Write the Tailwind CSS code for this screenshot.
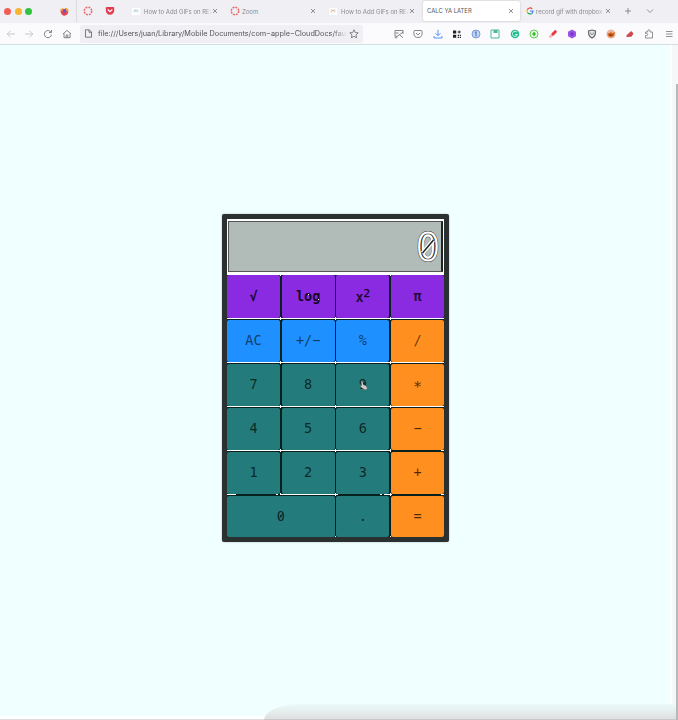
<!DOCTYPE html>
<html lang="en">
<head>
<meta charset="utf-8">
<title>CALC YA LATER</title>
<script src="https://cdn.jsdelivr.net/npm/@tailwindcss/browser@4"></script>
</head>
<body class="w-[678px] h-[720px] overflow-hidden bg-[#f0ffff] font-['Inter',sans-serif] flex flex-col relative">
<svg class="hidden">
  <symbol id="close" viewBox="0 0 6 6"><path d="M1 1l4 4M5 1L1 5" stroke="#77777b" stroke-width=".8" fill="none"/></symbol>
  <symbol id="canvas" viewBox="0 0 10 10"><circle cx="5" cy="5" r="3.7" fill="none" stroke="#e8676a" stroke-width="1.500" stroke-dasharray="1.900 1"/></symbol>
</svg>

<header class="h-[45px] shrink-0 flex flex-col border-b border-[#d5dfe0]">
  <div class="h-[23px] pb-[1px] bg-[#f0f0f4] flex items-center text-[6px] text-[#8a8a8f]">
    <div class="w-[77px] h-full flex items-center pl-[4px] border-r border-[#dadadf] shrink-0">
      <span class="size-[7px] rounded-full bg-[#f25c55] shrink-0"></span>
      <span class="size-[7px] rounded-full bg-[#f6b52e] ml-[4px] shrink-0"></span>
      <span class="size-[7px] rounded-full bg-[#2fc440] ml-[3px] shrink-0"></span>
      <svg class="ml-[28px] size-[9px] shrink-0" viewBox="0 0 9 9"><path d="M.8 2L2 3l.8-2L4 2.200 6 .8l.5 1.400 1.500-.4C9 6 7.500 8.500 4.500 8.500S0 6 .8 2z" fill="#f0702f"/><path d="M.8 3c1 0 2 1.500 3.500 1.800L3 5.500l3 .5 2.200-2C8 7 6 8.500 4.500 8.500S1 7 .8 3z" fill="#e6415a"/><circle cx="4.600" cy="4" r="1.900" fill="#7352c7"/><path d="M6 .8l2 1.200.3 2.500L6.300 3.500zM.8 1.800L2.800 1.500 2.500 3.500 1 4z" fill="#f9a72c"/></svg>
    </div>
    <svg class="ml-[6px] size-[10px] shrink-0"><use href="#canvas"/></svg>
    <svg class="ml-[12px] size-[10px] shrink-0" viewBox="0 0 10 10"><path d="M1.800 1h6.400q1 0 1 1v2.500a4.200 4.200 0 0 1-8.400 0V2q0-1 1-1z" fill="#e23b50"/><path d="M3 3.800l2 1.900 2-1.900" fill="none" stroke="#fff" stroke-width="1.200" stroke-linecap="round"/></svg>
    <div class="ml-[17px] w-[86px] flex items-center shrink-0">
      <span class="w-[8px] h-[7px] bg-white text-[4px] leading-[6px] text-center text-[#888]">(•)</span>
      <span class="ml-[4px] w-[68px] overflow-hidden whitespace-nowrap [mask-image:linear-gradient(90deg,#000_90%,transparent)]">How to Add GIFs on REA</span>
      <svg class="size-[6px] shrink-0"><use href="#close"/></svg>
    </div>
    <div class="ml-[12px] w-[86px] flex items-center shrink-0">
      <svg class="size-[10px]"><use href="#canvas"/></svg>
      <span class="ml-[2px] grow">Zoom</span>
      <svg class="size-[6px] shrink-0"><use href="#close"/></svg>
    </div>
    <div class="ml-[13px] w-[86px] flex items-center shrink-0">
      <span class="w-[8px] h-[7px] bg-white text-[4px] leading-[6px] text-center text-[#888]">(•)</span>
      <span class="ml-[4px] w-[68px] overflow-hidden whitespace-nowrap [mask-image:linear-gradient(90deg,#000_90%,transparent)]">How to Add GIFs on REA</span>
      <svg class="size-[6px] shrink-0"><use href="#close"/></svg>
    </div>
    <div class="ml-[8px] w-[97px] h-[20px] bg-white rounded-[2px] shadow-[0_0_2px_#8888] flex items-center pl-[4px] pr-[6px] shrink-0 text-[#55555a]">
      <span class="grow whitespace-nowrap text-[5.900px]">CALC YA LATER</span>
      <svg class="size-[6px] shrink-0"><use href="#close"/></svg>
    </div>
    <div class="ml-[6px] w-[86px] flex items-center shrink-0">
      <svg class="size-[8px]" viewBox="0 0 8 8" fill="none" stroke-width="1.200"><path d="M6.200 1.800A3 3 0 0 0 1.300 2.800" stroke="#e54335"/><path d="M1.300 2.800a3 3 0 0 0 .3 2.900" stroke="#f6b704"/><path d="M1.600 5.700A3 3 0 0 0 5.800 6.400" stroke="#34a353"/><path d="M5.800 6.400A3 3 0 0 0 7 4H4" stroke="#4280ef"/></svg>
      <span class="ml-[2px] w-[69px] overflow-hidden whitespace-nowrap [mask-image:linear-gradient(90deg,#000_88%,transparent)]">record gif with dropbox</span>
      <svg class="size-[6px] shrink-0"><use href="#close"/></svg>
    </div>
    <svg class="ml-[12px] size-[8px] shrink-0" viewBox="0 0 8 8"><path d="M4 1v6M1 4h6" stroke="#77777c" stroke-width=".8"/></svg>
    <svg class="ml-[14px] size-[8px] shrink-0" viewBox="0 0 8 8"><path d="M1 2.500l3 3 3-3" stroke="#77777c" stroke-width=".8" fill="none"/></svg>
  </div>

  <div class="h-[21px] bg-[#fbfbfd] flex items-center shrink-0">
    <svg class="ml-[6px] size-[10px] shrink-0" viewBox="0 0 10 10" fill="none" stroke="#c3c3c8" stroke-width=".9"><path d="M9 5H1.200M4.500 1.700L1.200 5l3.300 3.300"/></svg>
    <svg class="ml-[8px] size-[10px] shrink-0" viewBox="0 0 10 10" fill="none" stroke="#c3c3c8" stroke-width=".9"><path d="M1 5h7.800M5.500 1.700L8.800 5 5.500 8.300"/></svg>
    <svg class="ml-[9px] size-[10px] shrink-0" viewBox="0 0 10 10" fill="none" stroke="#77777b" stroke-width=".9"><path d="M8 3.200A3.600 3.600 0 1 0 8.500 5.700M8.500 1v2.600H6"/></svg>
    <svg class="ml-[9px] size-[10px] shrink-0" viewBox="0 0 10 10" fill="none" stroke="#77777b" stroke-width=".9"><path d="M1 5l4-3.600L9 5M2 4.500v4.200h6V4.500M4.200 8.700V6h1.600v2.700"/></svg>
    <div class="ml-[8px] w-[283px] h-[18px] rounded-[2px] bg-[#f0f0f4] flex items-center pl-[4px] pr-[4px] shrink-0">
      <svg class="size-[9px] shrink-0" viewBox="0 0 9 9" fill="none" stroke="#6b6b70" stroke-width=".9"><path d="M1.500.8h3.800l2.200 2.200v5.200h-6zM5 1v2.300h2.300"/></svg>
      <span class="ml-[5px] pt-[1px] w-[250px] overflow-hidden whitespace-nowrap text-[7.270px] text-[#55555a] [mask-image:linear-gradient(90deg,#000_94%,transparent)]">file:///Users/juan/Library/Mobile Documents/com−apple−CloudDocs/fau</span>
      <svg class="ml-auto size-[10px] shrink-0" viewBox="0 0 10 10" fill="none" stroke="#66666b" stroke-width=".8"><path d="M5 .8l1.250 2.700 2.950.35-2.200 2 .6 2.950L5 7.350 2.400 8.800 3 5.850l-2.200-2 2.950-.35z"/></svg>
    </div>
    <div class="ml-[31px] flex items-center gap-[9.250px] shrink-0">
      <svg class="size-[10px]" viewBox="0 0 10 10" fill="none" stroke="#77777b" stroke-width=".9"><path d="M1 7V1.500h8V5M1.500 4h3M9 3L3 7.500M5.500 5.800l3.500 3"/><circle cx="2" cy="8" r="1"/></svg>
      <svg class="size-[10px]" viewBox="0 0 10 10" fill="none" stroke="#77777b" stroke-width=".9"><path d="M1.800 1.500h6.400q.9 0 .9.900v2a4.100 4.100 0 0 1-8.200 0v-2q0-.9.900-.9zM3 4l2 1.900L7 4"/></svg>
      <svg class="size-[10px]" viewBox="0 0 10 10" fill="none" stroke="#5b8ff0" stroke-width="1"><path d="M5 .8v5.700M2.500 4.200L5 6.700l2.500-2.500M1 7v2h8V7"/></svg>
      <svg class="size-[10px]" viewBox="0 0 10 10" fill="#222"><path d="M1 1.500h3.200v3H1zM1 5.800h3.200v3H1zM5.700 5.800h1.300v1.200H5.700zM7.700 5.800h1.200V7H7.700zM5.700 7.700h1.300v1.200H5.700zM7.700 7.700h1.200v1.200H7.700z"/><path d="M7.200 1.200L9 3 7.200 4.800 5.400 3z" fill="#555"/></svg>
      <svg class="size-[10px]" viewBox="0 0 10 10"><circle cx="5" cy="5" r="4" fill="#c4d5f2" stroke="#7c9bd6"/><path d="M5 2.500v5M3.800 3.400L5 2.600" stroke="#4876c8" stroke-width="1.100" fill="none"/></svg>
      <svg class="size-[10px]" viewBox="0 0 10 10" fill="none" stroke="#4fb99b" stroke-width="1"><path d="M1 1h8v8H1z"/><path d="M3.500 1v3h4V1" fill="#4fb99b" stroke="none"/></svg>
      <svg class="size-[10px]" viewBox="0 0 10 10"><circle cx="5" cy="5" r="4.300" fill="#21bd91"/><path d="M7 3.200A2.600 2.600 0 1 0 7.500 5.500H5" stroke="#fff" fill="none" stroke-width=".8"/></svg>
      <svg class="size-[10px]" viewBox="0 0 10 10"><circle cx="5" cy="5" r="4" fill="#e9f9e7" stroke="#5ecb50"/><path d="M5 2.800L7 5 5 7.200 3 5z" fill="#39b92d"/></svg>
      <svg class="size-[10px]" viewBox="0 0 10 10" stroke-linecap="round" stroke-width="3"><path d="M2.500 7.500l2-2" stroke="#f2b9ba"/><path d="M5 5l2.300-2.300" stroke="#e9383f"/></svg>
      <svg class="size-[10px]" viewBox="0 0 10 10"><path d="M5 .5L9 2.700v4.600L5 9.500 1 7.300V2.700z" fill="#9a55e3"/><circle cx="5" cy="5" r="1.700" fill="#7a30c8"/></svg>
      <svg class="size-[10px]" viewBox="0 0 10 10"><path d="M5 1l3.500 1C8.700 5.500 7.600 7.800 5 9 2.400 7.800 1.300 5.500 1.500 2z" fill="#e7e7e7" stroke="#6a6a6a" stroke-width="1.200"/><path d="M3.700 3.500v1.400q1.300 1.600 2.600 0V3.500" fill="none" stroke="#777" stroke-width=".8"/></svg>
      <svg class="size-[10px]" viewBox="0 0 10 10"><circle cx="5" cy="5" r="4.500" fill="#e9b9a6"/><path d="M1.500 4l2 .3L5 2.500l1 1.800L9 3 8 7 5 8.500 2 7z" fill="#df6924"/><path d="M3 4.500l2 1L7 5 6 7H3.500z" fill="#854118"/></svg>
      <svg class="size-[10px]" viewBox="0 0 10 10"><path d="M1.500 6.200L6.200 2 8.500 4.500 6.500 7.700 1.500 8z" fill="#cf4a4e"/></svg>
      <svg class="size-[10px]" viewBox="0 0 10 10" fill="none" stroke="#77777b" stroke-width=".8"><path d="M1.500 9V6.500h1.200a1 1 0 0 0 0-2H1.500V3h2.200V2a1.200 1.200 0 0 1 2.400 0v1h2.400v6z"/></svg>
      <svg class="size-[10px]" viewBox="0 0 10 10"><path d="M2 2.500h6.500M2 5h6.500M2 7.500h6.500" stroke="#77777b" stroke-width=".8"/></svg>
    </div>
  </div>
</header>

<main class="grow flex items-start pl-[222px] pt-[169px]">
  <section class="w-[227px] h-[328px] bg-[#2b3031] rounded-[2px] px-[5px] pt-[5px] shadow-[0_0_2px_#5557] font-['DejaVu_Sans_Mono',monospace] text-[13.500px] text-black/70">
    <div class="w-[217px] h-[56px] bg-white p-[1px] pt-[2px] pb-[3px]">
      <div class="h-full border border-[#555] border-r-2 border-r-[#222] bg-[#b1bbb7] flex items-center justify-end pr-[1px]">
        <svg class="w-[24px] h-[36px]" viewBox="0 0 24 36">
          <text x="12" y="31" text-anchor="middle" font-family="DejaVu Sans Mono" font-size="37" fill="#222" stroke="#222" stroke-width="3">0</text>
          <text x="12" y="31" text-anchor="middle" font-family="DejaVu Sans Mono" font-size="37" fill="#222" stroke="#fff" stroke-width="2.200">0</text>
          <ellipse cx="12" cy="17.500" rx="4" ry="9" fill="#b1bbb7"/>
          <path d="M6.500 24L17.500 11" stroke="#fff" stroke-width="4"/><path d="M6.500 24L17.500 11" stroke="#222" stroke-width="1.500"/>
        </svg>
      </div>
    </div>
    <div class="w-[217px] h-[262px] bg-[#08211f] grid grid-cols-[53px_53px_53px_53px] gap-x-[1.660px] grid-rows-[43px_repeat(4,42px)_41px] gap-y-[2px] relative">
      <button class="rounded-[2px] bg-[#8a2be2] font-bold text-black/80">√</button>
      <button class="rounded-[2px] bg-[#8a2be2] font-bold text-black/85">log</button>
      <button class="rounded-[2px] bg-[#8a2be2] font-bold text-black/75 pt-[2px]">x<sup class="text-[11px] font-normal [-webkit-text-stroke:.4px]">2</sup></button>
      <button class="rounded-[2px] bg-[#8a2be2] font-bold text-black/75">π</button>
      <button class="pb-[2px] rounded-[2px] bg-[#1e90ff] text-black/60">AC</button>
      <button class="pb-[2px] rounded-[2px] bg-[#1e90ff] text-black/60">+/−</button>
      <button class="pb-[2px] rounded-[2px] bg-[#1e90ff] text-black/60">%</button>
      <button class="pb-[2px] rounded-[2px] bg-[#ff8f1f] text-black/60">/</button>
      <button class="pb-[2px] rounded-[2px] bg-[#247b7b]">7</button>
      <button class="pb-[2px] rounded-[2px] bg-[#247b7b]">8</button>
      <button class="pb-[2px] rounded-[2px] bg-[#247b7b]">9</button>
      <button class="pb-[2px] rounded-[2px] bg-[#ff8f1f]"><span class="text-[15px]">∗</span></button>
      <button class="pb-[2px] rounded-[2px] bg-[#247b7b]">4</button>
      <button class="pb-[2px] rounded-[2px] bg-[#247b7b]">5</button>
      <button class="pb-[2px] rounded-[2px] bg-[#247b7b]">6</button>
      <button class="pb-[2px] rounded-[2px] bg-[#ff8f1f]">−</button>
      <button class="pb-[2px] rounded-[2px] bg-[#247b7b]">1</button>
      <button class="pb-[2px] rounded-[2px] bg-[#247b7b]">2</button>
      <button class="pb-[2px] rounded-[2px] bg-[#247b7b]">3</button>
      <button class="pb-[2px] rounded-[2px] bg-[#ff8f1f]">+</button>
      <button class="rounded-[2px] bg-[#247b7b] col-span-2"><span class="relative">0<svg class="absolute left-[2px] top-[4px] w-[4px] h-[8px]" viewBox="0 0 4 8"><path d="M.5 6.500L3.700 1.500" stroke="#0b2525" stroke-width="1"/></svg></span></button>
      <button class="rounded-[2px] bg-[#247b7b]">.</button>
      <button class="rounded-[2px] bg-[#ff8f1f]">=</button>
      <svg class="absolute left-0 top-0 w-[217px] h-[263px] pointer-events-none" viewBox="0 0 217 263" shape-rendering="crispEdges" stroke="#fff" fill="none">
        <path d="M0 43.500h217M0 87.500h217M0 131.500h217M0 175.500h164M0 219.500h9M49 219.500h2M53 219.500h58M153 219.500h2M157 219.500h8M214 175.500h3M214 219.500h3"/>
        <path d="M53.500 42v3M108.500 42v3M163.500 42v3M53.500 86v3M108.500 86v3M163.500 86v3M53.500 130v3M108.500 130v3M163.500 130v3M53.500 174v3M108.500 174v3M163.500 174v3M53.500 218v2M108.500 218v3M163.500 218v3M53.500 0v1M163.500 0v1M108.500 261v1M163.500 261v1"/>
        <path d="M81 19.500h1M91 24.500h1"/>
      </svg>
      <svg class="absolute left-[132px] top-[105px] w-[10px] h-[11px]" viewBox="0 0 10 11"><path d="M2 1l1.500.5L5 5l2.500 1L8.500 9 6 10 3 8 1 6l1.500-.5z" fill="#ccc" stroke="#555" stroke-width=".6"/><path d="M4 2.500h1.500v2H4z" fill="#222"/></svg>
    </div>
  </section>
</main>

<div class="absolute left-[670px] top-[45px] w-[8px] h-[675px] bg-[#f5f7f8] border-l-2 border-white"></div>
<div class="absolute left-[676px] top-[84px] w-[2px] h-[636px] bg-[#b5b9ba]"></div>
<div class="absolute left-0 top-[716px] w-[265px] h-[4px] bg-white border-b border-[#ddd]"></div>
<div class="absolute left-[264px] top-[704px] w-[412px] h-[16px] rounded-tl-[36px_16px] border-b border-[#c8c8c8] bg-linear-to-b from-[#ecfafa] via-[#e4eeed] to-[#dfdfdf]"></div>
</body>
</html>
